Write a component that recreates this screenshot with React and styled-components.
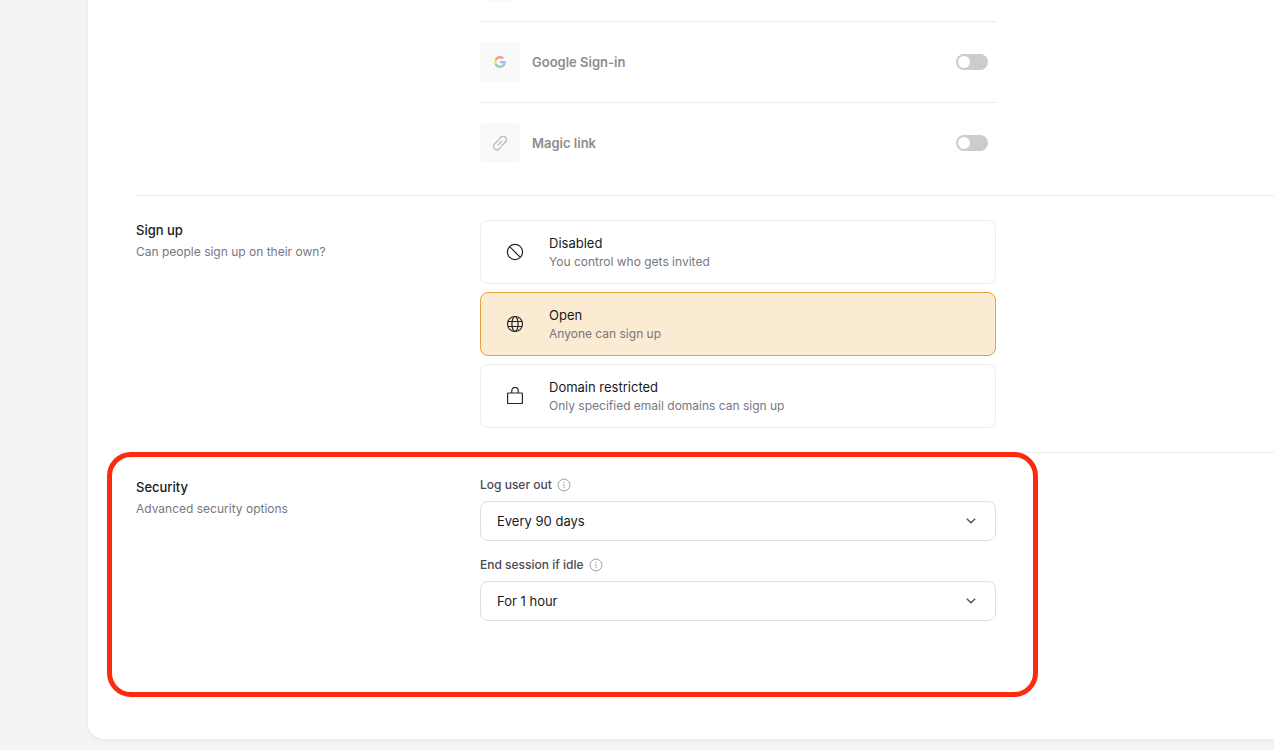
import React, { useState } from "react";
import styled, { createGlobalStyle } from "styled-components";

const providers = [
  { id: "google", name: "Google Sign-in", icon: <GoogleIcon /> },
  { id: "magic", name: "Magic link", icon: <LinkIcon /> },
];

const signUpOptions = [
  {
    id: "disabled",
    title: "Disabled",
    text: "You control who gets invited",
    icon: <BanIcon />,
  },
  { id: "open", title: "Open", text: "Anyone can sign up", icon: <GlobeIcon /> },
  {
    id: "domain",
    title: "Domain restricted",
    text: "Only specified email domains can sign up",
    icon: <LockIcon />,
  },
];

function App() {
  const [enabled, setEnabled] = useState({ google: false, magic: false });
  const [signUp, setSignUp] = useState("open");
  const [logout, setLogout] = useState("90");
  const [idle, setIdle] = useState("1");

  return (
    <>
      <GlobalStyle />
      <Page>
        <Panel>
          <Providers>
            <ProviderRow>
              <ProviderIcon />
            </ProviderRow>
            {providers.map(({ id, name, icon }) => (
              <ProviderRow key={id}>
                <ProviderIcon>{icon}</ProviderIcon>
                <label htmlFor={id}>{name}</label>
                <Toggle
                  id={id}
                  type="checkbox"
                  role="switch"
                  checked={enabled[id]}
                  onChange={(e) =>
                    setEnabled({ ...enabled, [id]: e.target.checked })
                  }
                />
              </ProviderRow>
            ))}
          </Providers>

          <Section>
            <SectionBody>
              <Intro>
                <h2 id="signup-title">Sign up</h2>
                <p>Can people sign up on their own?</p>
              </Intro>
              <Options role="radiogroup" aria-labelledby="signup-title">
                {signUpOptions.map(({ id, title, text, icon }) => (
                  <Option key={id} $selected={signUp === id}>
                    <input
                      type="radio"
                      name="signup"
                      value={id}
                      checked={signUp === id}
                      onChange={() => setSignUp(id)}
                    />
                    {icon}
                    <span>
                      <OptionTitle>{title}</OptionTitle>
                      <OptionText>{text}</OptionText>
                    </span>
                  </Option>
                ))}
              </Options>
            </SectionBody>
          </Section>

          <Section>
            <SectionBody>
              <Highlight />
              <Intro>
                <h2>Security</h2>
                <p>Advanced security options</p>
              </Intro>
              <Fields>
                <Field>
                  <FieldLabel htmlFor="logout">
                    Log user out <InfoIcon />
                  </FieldLabel>
                  <SelectBox>
                    <select
                      id="logout"
                      value={logout}
                      onChange={(e) => setLogout(e.target.value)}
                    >
                      <option value="90">Every 90 days</option>
                    </select>
                    <ChevronIcon />
                  </SelectBox>
                </Field>
                <Field>
                  <FieldLabel htmlFor="idle">
                    End session if idle <InfoIcon />
                  </FieldLabel>
                  <SelectBox>
                    <select
                      id="idle"
                      value={idle}
                      onChange={(e) => setIdle(e.target.value)}
                    >
                      <option value="1">For 1 hour</option>
                    </select>
                    <ChevronIcon />
                  </SelectBox>
                </Field>
              </Fields>
            </SectionBody>
          </Section>
        </Panel>
      </Page>
    </>
  );
}

function GoogleIcon() {
  return (
    <svg width="12" height="12" viewBox="0 0 48 48" aria-hidden="true">
      <path
        fill="#EA4335"
        d="M24 9.5c3.54 0 6.71 1.22 9.21 3.6l6.85-6.85C35.9 2.38 30.47 0 24 0 14.62 0 6.51 5.38 2.56 13.22l7.98 6.19C12.43 13.72 17.74 9.5 24 9.5z"
      />
      <path
        fill="#4285F4"
        d="M46.98 24.55c0-1.57-.15-3.09-.38-4.55H24v9.02h12.94c-.58 2.96-2.26 5.48-4.78 7.18l7.73 6c4.51-4.18 7.09-10.36 7.09-17.65z"
      />
      <path
        fill="#FBBC05"
        d="M10.53 28.59c-.48-1.45-.76-2.99-.76-4.59s.27-3.14.76-4.59l-7.98-6.19C.92 16.46 0 20.12 0 24c0 3.88.92 7.54 2.56 10.78l7.97-6.19z"
      />
      <path
        fill="#34A853"
        d="M24 48c6.48 0 11.93-2.13 15.89-5.81l-7.73-6c-2.15 1.45-4.92 2.3-8.16 2.3-6.26 0-11.57-4.22-13.47-9.91l-7.98 6.19C6.51 42.62 14.62 48 24 48z"
      />
    </svg>
  );
}

function LinkIcon() {
  return (
    <svg
      width="18"
      height="18"
      viewBox="0 0 256 256"
      fill="none"
      stroke="#6f6f77"
      strokeWidth="16"
      strokeLinecap="round"
      aria-hidden="true"
    >
      <path d="M102 154l52-52" />
      <path d="M141 187l-23 23a48 48 0 0 1-68-68l41-41a44 44 0 0 1 18-11" />
      <path d="M115 69l23-23a48 48 0 0 1 68 68l-41 41a44 44 0 0 1-18 11" />
    </svg>
  );
}

function BanIcon() {
  return (
    <OptionIcon viewBox="0 0 18 18" aria-hidden="true">
      <circle cx="9" cy="9" r="7.6" />
      <path d="M3.6 3.6l10.8 10.8" />
    </OptionIcon>
  );
}

function GlobeIcon() {
  return (
    <OptionIcon viewBox="0 0 18 18" aria-hidden="true">
      <circle cx="9" cy="9" r="7.5" />
      <ellipse cx="9" cy="9" rx="3.1" ry="7.5" />
      <path d="M2.1 6.5h13.8M2.1 11.5h13.8" />
    </OptionIcon>
  );
}

function LockIcon() {
  return (
    <OptionIcon viewBox="0 0 18 18" aria-hidden="true">
      <rect x="1.6" y="6" width="14.8" height="10.5" rx=".6" />
      <path d="M5.8 6V3.6a3.2 3.2 0 0 1 6.4 0V6" />
    </OptionIcon>
  );
}

function InfoIcon() {
  return (
    <svg
      width="14"
      height="14"
      viewBox="0 0 14 14"
      fill="none"
      stroke="#a0a0a8"
      aria-hidden="true"
    >
      <circle cx="7" cy="7" r="5.9" />
      <path d="M6.1 6.4H7v3.2h.8" strokeWidth=".8" />
      <circle cx="6.8" cy="4.4" r=".6" fill="#a0a0a8" stroke="none" />
    </svg>
  );
}

function ChevronIcon() {
  return (
    <svg
      width="10"
      height="6"
      viewBox="0 0 10 6"
      fill="none"
      stroke="#52566c"
      strokeWidth="1.5"
      aria-hidden="true"
    >
      <path d="M.8 .8L5 4.8l4.2-4" />
    </svg>
  );
}

const GlobalStyle = createGlobalStyle`
  * {
    box-sizing: border-box;
  }

  body {
    margin: 0;
    background: #f3f3f5;
    color: #1a1a1e;
    font-family: Inter, "Liberation Sans", sans-serif;
    font-size: 13px;
  }

  h2,
  p {
    margin: 0;
  }
`;

const Page = styled.main`
  min-height: 100vh;
  padding: 0 0 11px 88px;
  overflow: hidden;
`;

const Panel = styled.div`
  padding: 0 0 94px 48px;
  background: #ffffff;
  border-radius: 0 0 0 16px;
  box-shadow: 0 1px 4px rgba(0, 0, 0, 0.06);
`;

const Providers = styled.div`
  max-width: 860px;
  margin-top: -59px;
  padding: 0 0 12px 344px;
`;

const ProviderRow = styled.div`
  display: flex;
  align-items: center;
  gap: 12px;
  padding: 20px 8px 20px 0;
  color: #8c8c8e;
  font-weight: 600;

  label {
    flex: 1;
  }

  & + & {
    border-top: 1px solid #ececee;
  }
`;

const ProviderIcon = styled.span`
  display: flex;
  align-items: center;
  justify-content: center;
  width: 40px;
  height: 40px;
  border-radius: 4px;
  background: #f9f9f9;

  svg {
    opacity: 0.5;
  }
`;

const Toggle = styled.input`
  display: flex;
  align-items: center;
  justify-content: ${({ checked }) => (checked ? "flex-end" : "flex-start")};
  width: 32px;
  height: 16px;
  margin: 0;
  padding: 0 2px;
  appearance: none;
  border-radius: 8px;
  background: ${({ checked }) => (checked ? "#e9a23b" : "#cbcbd0")};
  cursor: pointer;

  &::before {
    content: "";
    width: 12px;
    height: 12px;
    border-radius: 50%;
    background: #ffffff;
  }
`;

const Section = styled.section`
  padding: 24px 0;
  border-top: 1px solid #ececee;
`;

const SectionBody = styled.div`
  position: relative;
  display: grid;
  grid-template-columns: 344px minmax(0, 1fr);
  max-width: 860px;
`;

const Intro = styled.div`
  h2 {
    font-size: 13px;
    font-weight: 500;
    line-height: 20px;
  }

  p {
    margin-top: 4px;
    color: #77777f;
    font-size: 12px;
    line-height: 16px;
  }
`;

const Options = styled.div`
  display: grid;
  gap: 8px;
`;

const Option = styled.label`
  display: flex;
  align-items: center;
  gap: 25px;
  height: 64px;
  padding: 0 25px;
  border: 1px solid ${({ $selected }) => ($selected ? "#e9a23b" : "#ececee")};
  border-radius: 8px;
  background: ${({ $selected }) => ($selected ? "#fcebd3" : "#ffffff")};
  cursor: pointer;

  input {
    position: absolute;
    opacity: 0;
  }
`;

const OptionIcon = styled.svg`
  width: 18px;
  height: 18px;
  fill: none;
  stroke: #26262a;
  stroke-width: 1.2;
`;

const OptionTitle = styled.span`
  display: block;
  margin-bottom: 2px;
  font-size: 13px;
  line-height: 18px;
`;

const OptionText = styled.span`
  display: block;
  color: #77777f;
  font-size: 12px;
  line-height: 16px;
`;

const Highlight = styled.div`
  position: absolute;
  top: -25px;
  right: -42px;
  left: -29px;
  height: 245px;
  border: 5px solid #fc2b10;
  border-radius: 24px;
  pointer-events: none;
`;

const Fields = styled.div`
  display: grid;
  gap: 16px;
`;

const Field = styled.div`
  display: grid;
  gap: 8px;
`;

const FieldLabel = styled.label`
  display: flex;
  align-items: center;
  gap: 5px;
  color: #4a4a51;
  font-size: 12px;
  font-weight: 500;
  line-height: 16px;
`;

const SelectBox = styled.div`
  display: grid;
  align-items: center;

  select,
  svg {
    grid-area: 1 / 1;
  }

  select {
    width: 100%;
    height: 40px;
    padding: 0 40px 0 16px;
    appearance: none;
    border: 1px solid #dfdfe4;
    border-radius: 8px;
    background: #ffffff;
    color: #1a1a1e;
    font-family: inherit;
    font-size: 13px;
  }

  svg {
    justify-self: end;
    margin-right: 20px;
    pointer-events: none;
  }
`;

export default App;
